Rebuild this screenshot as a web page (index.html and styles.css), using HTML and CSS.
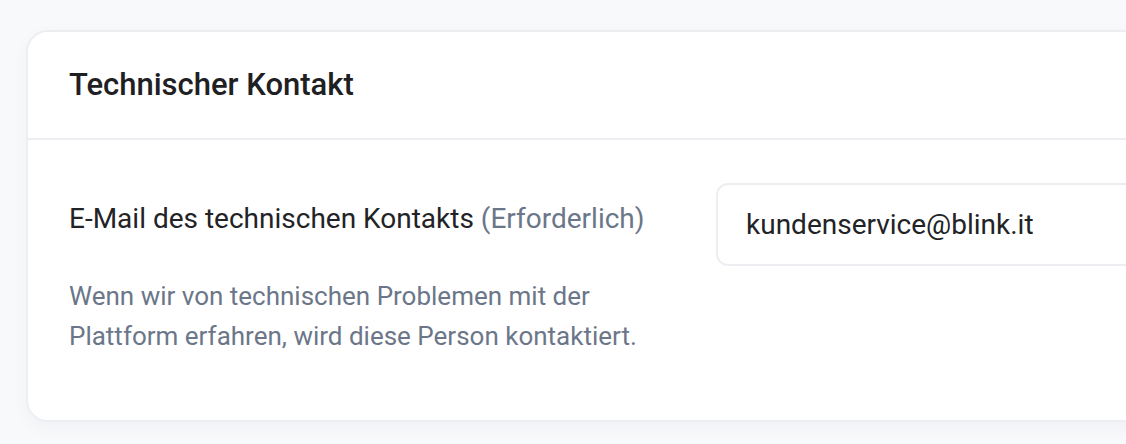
FILE: index.html
```html
<!DOCTYPE html>
<html lang="de">
<head>
<meta charset="utf-8">
<link rel="stylesheet" href="styles.css">
</head>
<body>
<div class="page">
  <section class="card">
    <header class="card-header">
      <h2 class="card-title">Technischer Kontakt</h2>
    </header>
    <div class="card-body">
      <div class="field-info">
        <div class="field-label">E-Mail des technischen Kontakts <span class="required">(Erforderlich)</span></div>
        <p class="field-desc">Wenn wir von technischen Problemen mit der Plattform erfahren, wird diese Person kontaktiert.</p>
      </div>
      <div class="field-input">
        <div class="input">kundenservice@blink.it</div>
      </div>
    </div>
  </section>
</div>
</body>
</html>
```

FILE: styles.css
```css
html, body {
  margin: 0;
  padding: 0;
  background: #f8f9fb;
  overflow: hidden;
  width: 1126px;
  height: 444px;
}
body {
  font-family: Roboto, "Liberation Sans", sans-serif;
  color: #222326;
}
.page {
  padding: 30px 0 0 26px;
}
.card {
  width: 1300px;
  background: #ffffff;
  border: 2px solid #eceef2;
  border-radius: 22px;
  box-shadow: 0 6px 18px rgba(30, 40, 70, 0.035);
}
.card-header {
  padding: 34px 41px 34px;
  border-bottom: 2px solid #eceef2;
}
.card-title {
  margin: 0;
  font-size: 31px;
  line-height: 38px;
  font-weight: 500;
  color: #1f2023;
}
.card-body {
  display: flex;
  gap: 47px;
  padding: 43px 41px 64px;
}
.field-info {
  width: 600px;
  flex: none;
}
.field-label {
  margin-top: 16px;
  font-size: 28px;
  line-height: 40px;
  color: #222326;
}
.required {
  color: #6b7789;
}
.field-desc {
  margin: 37px 0 0;
  font-size: 26px;
  line-height: 40px;
  color: #6b7789;
}
.field-input {
  flex: 1;
}
.input {
  box-sizing: border-box;
  width: 600px;
  height: 83px;
  border: 2px solid #eceef2;
  border-radius: 12px;
  padding: 0 28px;
  display: flex;
  align-items: center;
  font-size: 28px;
  color: #222326;
}
```
